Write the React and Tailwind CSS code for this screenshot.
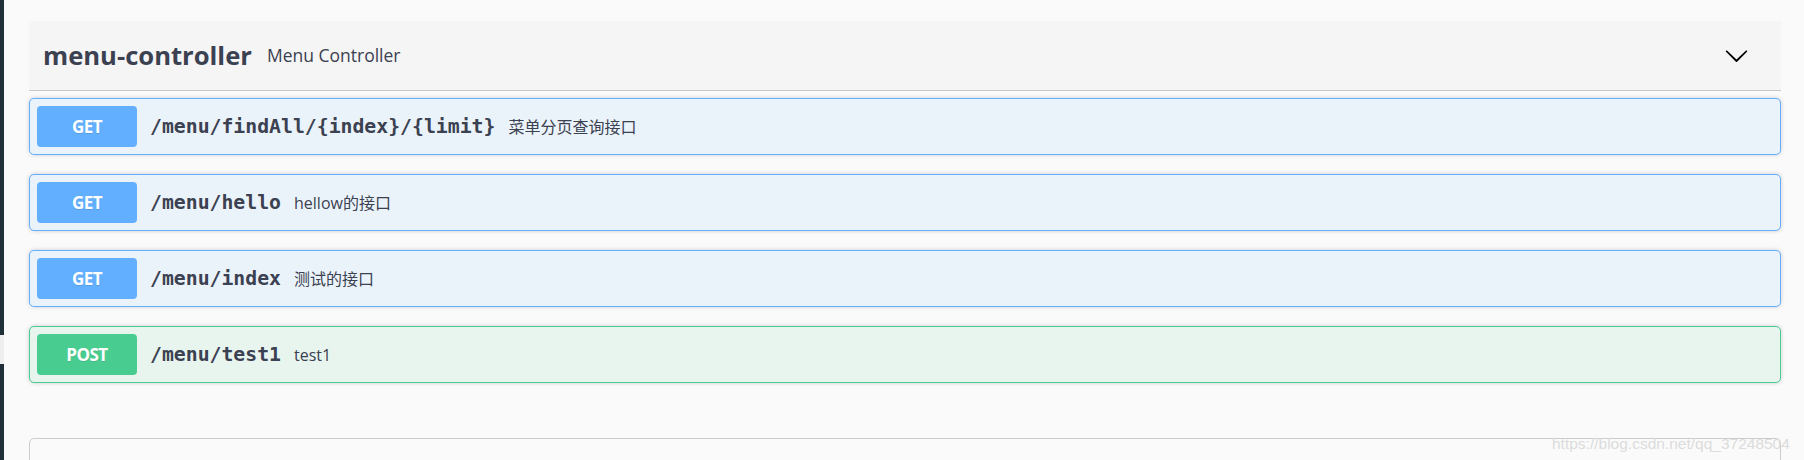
import React from 'react'

const OPERATIONS = [
  { method: 'GET', path: '/menu/findAll/{index}/{limit}', summary: '菜单分页查询接口' },
  { method: 'GET', path: '/menu/hello', summary: 'hellow的接口' },
  { method: 'GET', path: '/menu/index', summary: '测试的接口' },
  { method: 'POST', path: '/menu/test1', summary: 'test1' },
]

const METHOD_STYLES = {
  GET: { row: 'border-[#61affe] bg-[#ebf3fa]', badge: 'bg-[#61affe]' },
  POST: { row: 'border-[#49cc90] bg-[#e8f5ef]', badge: 'bg-[#49cc90]' },
}

const ArrowDown = () => (
  <svg width="25" height="25" viewBox="0 0 20 20" className="shrink-0">
    <path
      fill="#000"
      d="M17.418 6.109c.272-.268.709-.268.979 0s.271.701 0 .969l-7.908 7.83c-.27.268-.707.268-.979 0l-7.908-7.83c-.27-.268-.27-.701 0-.969.271-.268.709-.268.979 0L10 13.25l7.418-7.141z"
    />
  </svg>
)

const OperationRow = ({ method, path, summary }) => {
  const s = METHOD_STYLES[method]
  return (
    <div className={`flex items-center h-[57px] border rounded-[5px] px-[7px] shadow-[0_0_4px_rgba(0,0,0,0.19)] ${s.row}`}>
      <span
        className={`w-[100px] h-[41px] rounded-[4px] flex items-center justify-center text-white font-bold text-[17px] tracking-[-0.5px] [text-shadow:0_1px_0_rgba(0,0,0,0.1)] shrink-0 ${s.badge}`}
      >
        {method}
      </span>
      <span className="ml-[13px] font-['DejaVu_Sans_Mono',monospace] font-bold text-[19.8px] text-[#3b4151] whitespace-nowrap">
        {path}
      </span>
      <span className="ml-[13px] text-[16px] text-[#3b4151] font-['Open_Sans','Noto_Sans_CJK_SC',sans-serif] whitespace-nowrap">
        {summary}
      </span>
    </div>
  )
}

export default function App() {
  return (
    <div className="relative flex h-[460px] w-full overflow-hidden bg-[#fafafa] font-['Open_Sans','Noto_Sans_CJK_SC',sans-serif]">
      {/* left edge of the sidebar */}
      <div className="w-[4px] flex flex-col shrink-0">
        <div className="h-[335px] bg-[#203038]" />
        <div className="h-[29px] bg-[#eeeeee]" />
        <div className="flex-1 bg-[#203038]" />
      </div>

      <div className="flex-1 pl-[25px] pr-[23px] pt-[21px]">
        {/* tag header */}
        <div className="flex items-center h-[70px] bg-[#f5f5f5] border-b border-[#c8c9cc] pl-[14px] pr-[32px]">
          <h3 className="text-[25.6px] font-bold text-[#3b4151] leading-none">menu-controller</h3>
          <span className="ml-[15px] text-[17.5px] text-[#3b4151]">Menu Controller</span>
          <div className="flex-1" />
          <ArrowDown />
        </div>

        <div className="mt-[7px] flex flex-col gap-[19px]">
          {OPERATIONS.map((op) => (
            <OperationRow key={op.path} {...op} />
          ))}
        </div>

        {/* next tag section */}
        <div className="mt-[55px] h-[60px] border border-[#cccccc] rounded-t-[5px] bg-[#fafafa]" />
      </div>

      <span className="absolute left-[1552px] top-[432px] text-[15.5px] font-['Liberation_Sans',sans-serif] text-[#dcdcdc] whitespace-nowrap">
        https://blog.csdn.net/qq_37248504
      </span>
    </div>
  )
}
